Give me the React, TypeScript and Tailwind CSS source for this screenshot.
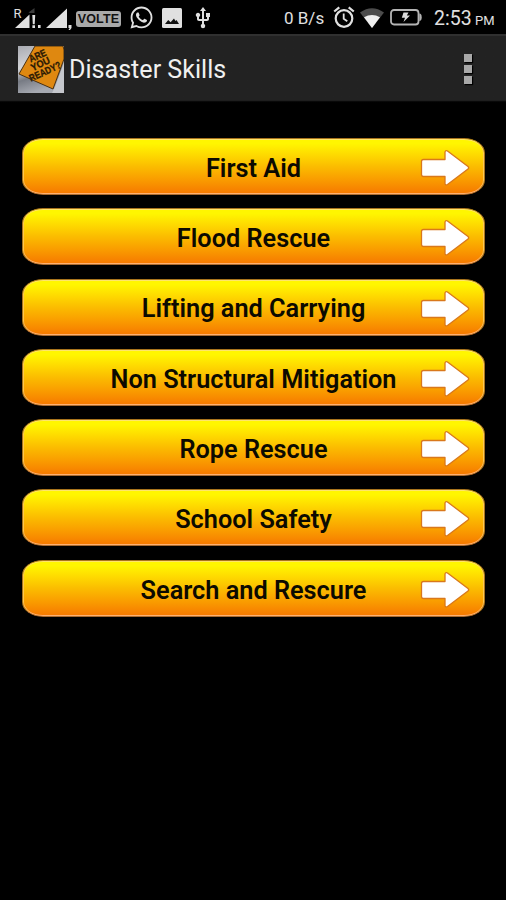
import {FaWhatsapp} from 'react-icons/fa';
import {MdUsb} from 'react-icons/md';

const SKILLS = [
    'First Aid',
    'Flood Rescue',
    'Lifting and Carrying',
    'Non Structural Mitigation',
    'Rope Rescue',
    'School Safety',
    'Search and Rescure',
];

function RoamingSignal() {
    return (
        <svg width="29" height="24" viewBox="0 0 29 24" className="ml-[13px] shrink-0" fill="#e0e0e0">
            <text x="0.5" y="12" fontSize="13" fontFamily="Roboto, sans-serif">R</text>
            <path d="M2 22 L16.5 8.5 V22 Z"/>
            <path d="M15.5 6.5 L21.5 2 V7 H17 Z" fill="#3c3c3c"/>
            <path d="M19.3 9 H22.2 L21.7 18.2 H19.8 Z M19.4 19.3 H22 V22 H19.4 Z M25 19 H27.6 V22 H25 Z"/>
        </svg>
    );
}

function Signal() {
    return (
        <svg width="27" height="24" viewBox="0 0 27 24" className="ml-1 shrink-0" fill="#e0e0e0">
            <path d="M0 22 L21 2.5 V22 Z M22.5 19 H25.5 V22 L24 24 H22.5 L23.7 22 H22.5 Z"/>
        </svg>
    );
}

function AlarmIcon() {
    return (
        <svg width="22" height="23" viewBox="0 0 22 23" className="ml-[9px] shrink-0" fill="none" stroke="#e0e0e0">
            <circle cx="11" cy="12.5" r="8.3" strokeWidth="2.2"/>
            <path d="M1.2 5.5 L6.3 1.3 M15.7 1.3 L20.8 5.5" strokeWidth="2.2"/>
            <path d="M10.7 7.5 V12.8 L14.3 15.2" strokeWidth="1.8"/>
        </svg>
    );
}

function WifiIcon() {
    return (
        <svg width="24" height="20" viewBox="0 0 24 20" className="ml-[5px] shrink-0">
            <path d="M0 4.5 Q12 -4 24 4.5 L12 20 Z" fill="#4c4c4c"/>
            <path d="M4 9.3 Q12 4.8 20 9.3 L12 20 Z" fill="#f0f0f0"/>
        </svg>
    );
}

function BatteryIcon() {
    return (
        <svg width="32" height="17" viewBox="0 0 32 17" className="ml-[6px] shrink-0">
            <rect x="1" y="1" width="27.5" height="14.5" rx="3" fill="none" stroke="#b4b4b4" strokeWidth="1.8"/>
            <path d="M29.3 4.5 Q31.7 4.5 31.7 8.2 Q31.7 12 29.3 12 Z" fill="#b4b4b4"/>
            <path d="M13.5 3.5 H18.5 L16.8 6.6 H20 L13.5 13 L15 8.8 H11.8 Z" fill="#dcdcdc"/>
        </svg>
    );
}

function StatusBar() {
    return (
        <div className="flex h-[34px] items-center bg-black pt-px text-[#e0e0e0]">
            <RoamingSignal/>
            <Signal/>
            <div className="ml-[3px] mt-[2px] flex h-[16px] w-[45px] shrink-0 items-center justify-center rounded-[3px] bg-[#a9a9a9] pt-px font-['Liberation_Sans',sans-serif] text-[12.5px] font-bold leading-none tracking-[0.2px] text-[#111]">
                VOLTE
            </div>
            <FaWhatsapp size={25} className="ml-[8px] shrink-0"/>
            <svg width="20" height="20" viewBox="0 0 20 20" className="ml-[8px] shrink-0">
                <rect width="20" height="20" rx="1.5" fill="#e0e0e0"/>
                <path d="M3 16 L6.2 12 L8.6 14.3 L12 10.5 L13.4 13 L14.5 12 L17 16 Z" fill="#111"/>
            </svg>
            <MdUsb size={24} className="ml-[9px] shrink-0"/>
            <span className="ml-[69px] mt-[2px] w-[40px] shrink-0 whitespace-nowrap text-[17px] leading-none">0 B/s</span>
            <AlarmIcon/>
            <WifiIcon/>
            <BatteryIcon/>
            <span className="ml-[12px] mt-[2px] w-[41px] shrink-0 text-[19.5px] leading-none">2:53</span>
            <span className="mt-[5px] shrink-0 text-[13px] leading-none">PM</span>
        </div>
    );
}

function AppLogo() {
    return (
        <svg width="46" height="47" viewBox="0 0 46 47" className="shrink-0">
            <defs>
                <linearGradient id="metal" x1="0" y1="0" x2="0.3" y2="1">
                    <stop offset="0" stopColor="#a9abb2"/>
                    <stop offset="0.45" stopColor="#d4d5d8"/>
                    <stop offset="0.7" stopColor="#777b84"/>
                    <stop offset="1" stopColor="#a7aab2"/>
                </linearGradient>
            </defs>
            <rect width="46" height="47" fill="url(#metal)"/>
            <path d="M37 41 L46 16 V47 H34 Z" fill="#c5c7cc"/>
            <path d="M17 0 H45 L46 4 V13 L35 43 L1 28 Z" fill="#df8810" stroke="#4b3010" strokeWidth="1"/>
            <g transform="rotate(-25 24 18)" fill="#2b1a05" stroke="#2b1a05" strokeWidth="0.3" fontFamily="Liberation Sans, sans-serif" fontWeight="bold" textAnchor="middle">
                <text x="23.5" y="12" fontSize="10" textLength="18" lengthAdjust="spacingAndGlyphs">ARE</text>
                <text x="22.5" y="20.5" fontSize="10" textLength="20" lengthAdjust="spacingAndGlyphs">YOU</text>
                <text x="23.5" y="29.5" fontSize="10" textLength="34" lengthAdjust="spacingAndGlyphs">READY?</text>
            </g>
        </svg>
    );
}

function ActionBar() {
    return (
        <header className="flex h-[69px] items-center border-t-2 border-[#303030] bg-linear-to-b from-[#222] from-96% to-black pl-[18px] pr-[34px]">
            <AppLogo/>
            <h1 className="ml-[5px] mt-px flex-1 whitespace-nowrap text-[25.1px] leading-none text-[#f0f0f0]">
                Disaster Skills
            </h1>
            <button aria-label="More options" className="mt-[-2px] flex flex-col gap-[3px]">
                <span className="size-2 bg-[#a8a8a8] shadow-[1px_1px_1px_#000]"/>
                <span className="size-2 bg-[#a8a8a8] shadow-[1px_1px_1px_#000]"/>
                <span className="size-2 bg-[#a8a8a8] shadow-[1px_1px_1px_#000]"/>
            </button>
        </header>
    );
}

function SkillButton({title}: {title: string}) {
    return (
        <button className="grid h-[57px] w-full grid-cols-1 items-center rounded-[21px/15px] border border-[#a8741c] border-b-[#a86a30] bg-linear-to-b from-[#fff600] from-10% via-[#fbbc00] via-50% to-[#f67c00] to-95% bg-origin-border shadow-[inset_0_1px_0.5px_#ffe56a,inset_0_-1px_0.5px_#ffb070,inset_1px_0_0.5px_#ffc850,inset_-1px_0_0.5px_#ffc850]">
            <span className="col-start-1 row-start-1 mt-[4px] whitespace-nowrap text-center text-[25.3px] font-semibold leading-none text-[#0c0a00]">
                {title}
            </span>
            <svg width="50" height="38" viewBox="0 0 50 38" className="col-start-1 row-start-1 mr-[14px] mt-[3px] justify-self-end">
                <path
                    d="M3.5 10.5 H25 V3 Q25.3 1 27.5 2 L48 17.5 Q49.3 18.8 48 20 L27.5 35.5 Q25.3 36.7 25 34.5 V27.5 H3.5 Q1.5 27.5 1.5 25.5 V12.5 Q1.5 10.5 3.5 10.5 Z"
                    fill="#fff"
                    stroke="#d9781b"
                    strokeWidth="1.3"
                    strokeLinejoin="round"
                />
            </svg>
        </button>
    );
}

export default function App() {
    return (
        <div className="h-[900px] w-[506px] overflow-hidden bg-black font-[Roboto,sans-serif]">
            <StatusBar/>
            <ActionBar/>
            <main className="flex flex-col gap-[13.3px] pl-[22px] pr-[21px] pt-[35px]">
                {SKILLS.map((title) => (
                    <SkillButton key={title} title={title}/>
                ))}
            </main>
        </div>
    );
}
